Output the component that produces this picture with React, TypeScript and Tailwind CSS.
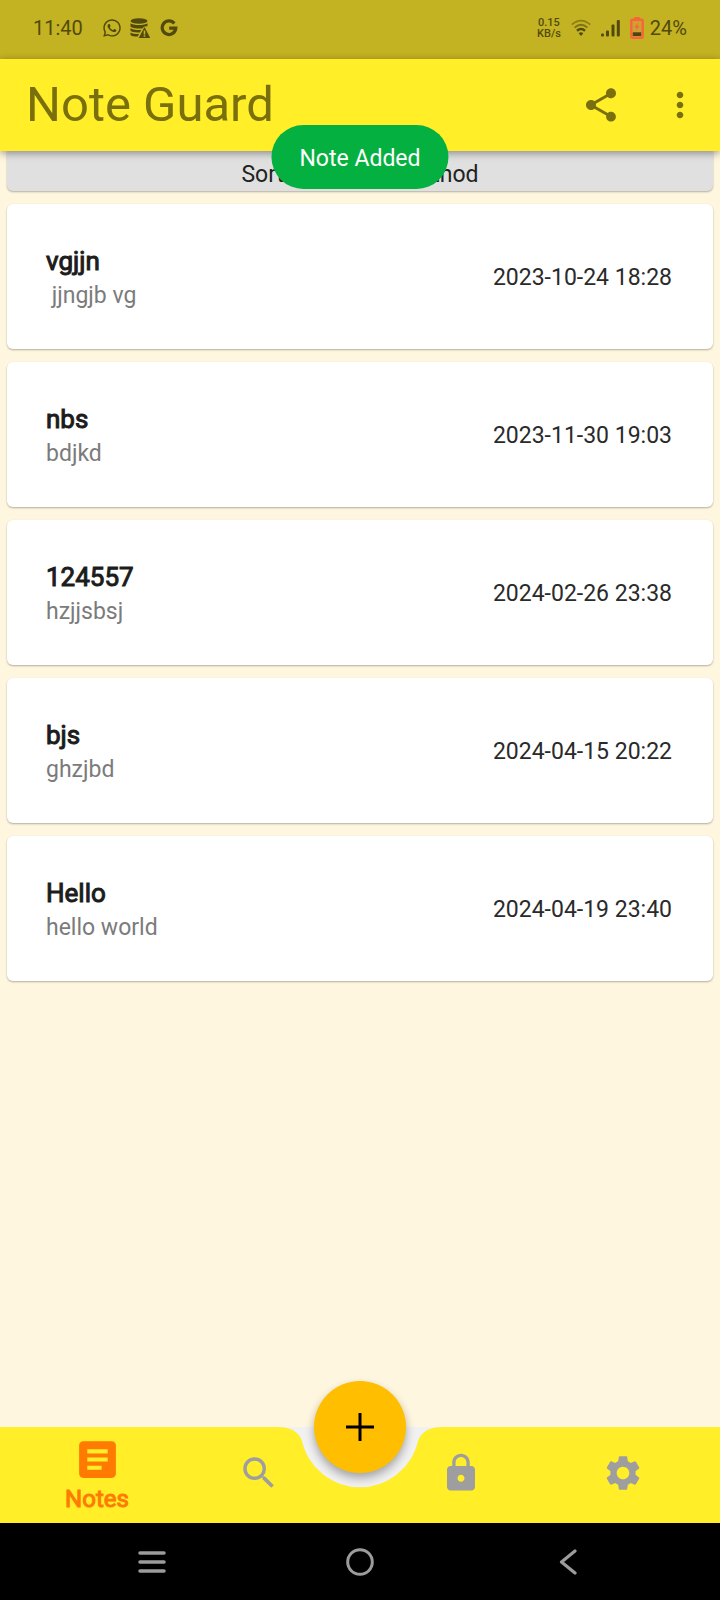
import React from "react";
import { MdShare, MdMoreVert, MdArticle, MdSearch, MdLock, MdSettings } from "react-icons/md";
import { FaWhatsapp } from "react-icons/fa";

type Note = { title: string; body: string; date: string };

const notes: Note[] = [
  { title: "vgjjn", body: " jjngjb vg", date: "2023-10-24 18:28" },
  { title: "nbs", body: "bdjkd", date: "2023-11-30 19:03" },
  { title: "124557", body: "hzjjsbsj", date: "2024-02-26 23:38" },
  { title: "bjs", body: "ghzjbd", date: "2024-04-15 20:22" },
  { title: "Hello", body: "hello world", date: "2024-04-19 23:40" },
];

function DatabaseAlertIcon() {
  return (
    <svg width="20" height="20" viewBox="0 0 20 20" fill="currentColor" aria-hidden="true">
      <ellipse cx="9" cy="3" rx="8.5" ry="2.8" />
      <path d="M.5 5.2C3 7.6 15 7.6 17.5 5.2V8l-2 .6-1.2-.1-2 2C7 10.800 1.500 10 .5 8.500z" />
      <path d="M.5 10c1.800 1.700 6 2.200 10.800 2l-1.500 2.400C5.500 14.600 1.500 14 .5 12.800z" />
      <path d="M.5 14.500c1.800 1.300 5 1.700 8.500 1.600L7.700 18.600C4.500 18.600 1.200 18 .5 17z" />
      <path fillRule="evenodd" d="M14.500 9 20.300 20H8.700zM13.700 12.600v3.800h1.600v-3.800zm0 4.700v1.500h1.600v-1.500z" />
    </svg>
  );
}

function GoogleIcon() {
  return (
    <svg width="18" height="18" viewBox="0 0 18 18" fill="none" stroke="currentColor" strokeWidth="3.200" aria-hidden="true">
      <path d="M14.300 4.400A6.800 6.800 0 1 0 15.800 9.200H9.200" />
    </svg>
  );
}

function WifiIcon() {
  return (
    <svg width="20" height="18" viewBox="0 0 20 18" fill="none" stroke="currentColor" strokeWidth="1.800" aria-hidden="true">
      <path d="M.8 5.600Q10-2.400 19.200 5.600" opacity=".5" />
      <path d="M3.600 8.600Q10 3 16.400 8.600" opacity=".6" />
      <path d="M6 11.700Q10 8.400 14 11.700" strokeWidth="2.400" />
      <path d="M7.700 14.200Q10 12.400 12.300 14.200L10 17z" fill="currentColor" stroke="none" />
    </svg>
  );
}

function SignalIcon() {
  return (
    <svg width="19" height="18" viewBox="0 0 19 18" fill="currentColor" aria-hidden="true">
      <rect x="0" y="14.500" width="3" height="3" rx="1" />
      <rect x="5" y="11.500" width="3" height="6" rx="1" />
      <rect x="10.500" y="5.500" width="3" height="12" rx="1" />
      <rect x="15.800" y="1" width="3" height="16.500" rx="1" />
    </svg>
  );
}

function BatteryIcon() {
  return (
    <svg width="14" height="22" viewBox="0 0 14 22" aria-hidden="true">
      <rect x="4" y="0" width="6" height="3" rx="1" fill="#f7663a" />
      <rect x="1.300" y="2.800" width="11.400" height="18" rx="1" fill="#cda132" stroke="#f7663a" strokeWidth="2.400" />
      <path d="M7.700 5.500 4.500 10.500H6.600L6.200 13.500 9.500 9H7.300z" fill="#f7663a" />
      <rect x="2.800" y="15.300" width="8.400" height="3.700" fill="#4c4510" />
    </svg>
  );
}

function StatusBar() {
  return (
    <div className="flex h-[59px] items-center justify-between bg-[#c3b222] px-[33px] pb-1 text-[#524a0c]">
      <div className="flex items-center">
        <span className="w-[69px] text-[20px] leading-6">11:40</span>
        <FaWhatsapp className="mr-2 size-5" />
        <DatabaseAlertIcon />
        <span className="ml-[10px]">
          <GoogleIcon />
        </span>
      </div>
      <div className="flex items-center">
        <div className="mr-[10px] text-center text-[11px] font-medium leading-[11px]">
          <div>0.15</div>
          <div>KB/s</div>
        </div>
        <WifiIcon />
        <span className="ml-[10px] mr-[10px]">
          <SignalIcon />
        </span>
        <BatteryIcon />
        <span className="ml-[6px] text-[20px] leading-6">24%</span>
      </div>
    </div>
  );
}

function AppBar() {
  return (
    <header className="relative z-10 flex h-[92px] items-center justify-between bg-[#ffee28] pl-[26px] pr-5 text-[#7a6f0d] shadow-[0_2px_8px_rgba(0,0,0,0.4)]">
      <h1 className="text-[49px] leading-[56px]">Note Guard</h1>
      <div className="flex items-center gap-[39px]">
        <button type="button" aria-label="Share">
          <MdShare className="size-10" />
        </button>
        <button type="button" aria-label="More options">
          <MdMoreVert className="size-10" />
        </button>
      </div>
      <div
        role="status"
        className="absolute left-1/2 top-[66px] flex h-16 -translate-x-1/2 items-center whitespace-nowrap rounded-full bg-[#04b140] px-7 pt-1 text-[23px] leading-7 text-white"
      >
        Note Added
      </div>
    </header>
  );
}

function NoteCard({ note }: { note: Note }) {
  return (
    <li className="flex h-[145px] items-center justify-between rounded-md bg-white pl-[39px] pr-[41px] pt-[3px] shadow-[0_1px_2px_rgba(0,0,0,0.3)]">
      <div className="flex flex-col gap-[3px]">
        <h2 className="text-[26px] leading-8 text-[#1c1c1c] [-webkit-text-stroke:1px]">{note.title}</h2>
        <p className="whitespace-pre text-[23px] leading-8 text-[#7b7b7b]">{note.body}</p>
      </div>
      <time className="text-[23px] leading-7 text-[#2a2a2a]">{note.date}</time>
    </li>
  );
}

function BottomNav() {
  return (
    <nav className="relative h-24 bg-[#fff6df]" aria-label="Main">
      <div className="absolute inset-0 flex">
        <div className="flex-1 bg-[#ffee28]" />
        <svg width="164" height="96" viewBox="0 0 164 96" aria-hidden="true">
          <rect width="164" height="96" fill="#f1f1f1" />
          <path d="M0 0Q19 0 24 14A59.500 59.500 0 0 0 140 14Q145 0 164 0V96H0Z" fill="#ffee28" />
        </svg>
        <div className="flex-1 bg-[#ffee28]" />
      </div>
      <div className="relative grid h-full grid-cols-[1fr_1fr_40px_1fr_1fr] px-4 text-[#9e9e9e]">
        <button type="button" className="flex flex-col items-center pt-2 text-[#ff7a00]">
          <MdArticle className="size-[49px]" />
          <span className="text-[24px] leading-[30px] [-webkit-text-stroke:1px]">Notes</span>
        </button>
        <button type="button" aria-label="Search" className="flex items-center justify-center pb-1">
          <MdSearch className="size-[42px]" />
        </button>
        <span />
        <button type="button" aria-label="Locked notes" className="flex items-center justify-center pb-1">
          <MdLock className="size-[42px]" />
        </button>
        <button type="button" aria-label="Settings" className="flex items-center justify-center pb-1">
          <MdSettings className="size-[42px]" />
        </button>
      </div>
      <button
        type="button"
        aria-label="Add note"
        className="absolute -top-[46px] left-1/2 flex size-[92px] -translate-x-1/2 items-center justify-center rounded-full bg-[#ffbf00] shadow-[0_5px_10px_rgba(0,0,0,0.32)]"
      >
        <svg width="28" height="28" viewBox="0 0 28 28" stroke="#000" strokeWidth="3" aria-hidden="true">
          <path d="M14 0V28M0 14H28" />
        </svg>
      </button>
    </nav>
  );
}

function SystemBar() {
  return (
    <div className="grid h-[77px] grid-cols-3 bg-black px-12 text-[#9c9c9c]">
      <button type="button" aria-label="Recent apps" className="flex items-center justify-center">
        <svg width="28" height="24" viewBox="0 0 28 24" stroke="currentColor" strokeWidth="3.500" strokeLinecap="round" aria-hidden="true">
          <path d="M2 3H26M2 12H26M2 21H26" />
        </svg>
      </button>
      <button type="button" aria-label="Home" className="flex items-center justify-center">
        <svg width="28" height="28" viewBox="0 0 28 28" fill="none" stroke="currentColor" strokeWidth="3" aria-hidden="true">
          <circle cx="14" cy="14" r="12.300" />
        </svg>
      </button>
      <button type="button" aria-label="Back" className="flex items-center justify-center">
        <svg width="18" height="26" viewBox="0 0 18 26" fill="none" stroke="currentColor" strokeWidth="3.200" strokeLinecap="round" strokeLinejoin="round" aria-hidden="true">
          <path d="M16 2 2.500 13 16 24" />
        </svg>
      </button>
    </div>
  );
}

export default function App() {
  return (
    <div className="flex min-h-screen flex-col bg-[#fff6df] font-['Roboto',sans-serif]">
      <StatusBar />
      <AppBar />
      <main className="flex-1 px-[7px] pb-16">
        <button
          type="button"
          className="block h-10 w-full rounded-b-md bg-[#e0e0e0] pb-[2px] pt-[10px] text-center text-[23px] leading-7 text-[#222] shadow-[0_1px_2px_rgba(0,0,0,0.3)]"
        >
          Sort By Default Method
        </button>
        <ul className="mt-[13px] flex flex-col gap-[13px]">
          {notes.map((note) => (
            <NoteCard key={note.date} note={note} />
          ))}
        </ul>
      </main>
      <BottomNav />
      <SystemBar />
    </div>
  );
}
